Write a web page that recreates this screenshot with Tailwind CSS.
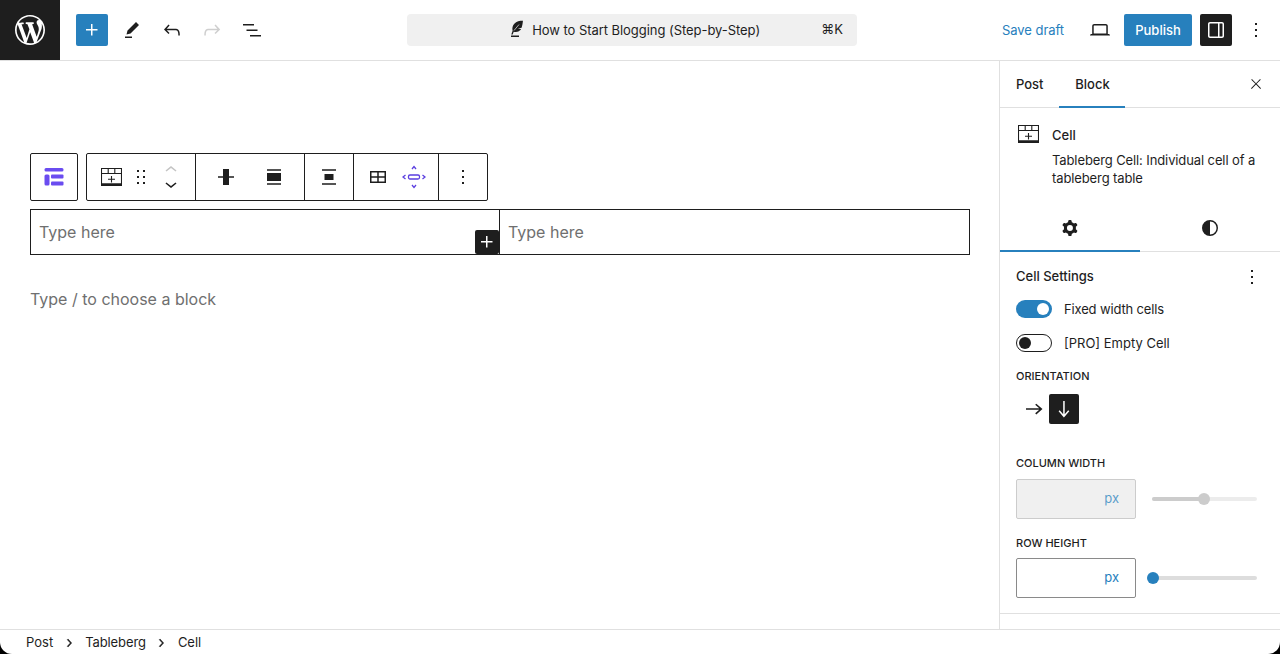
<!doctype html>
<html>
<head>
<meta charset="utf-8">
<script src="https://cdn.jsdelivr.net/npm/@tailwindcss/browser@4"></script>
</head>
<body class="bg-black">
<div class="flex h-[654px] w-[1280px] flex-col overflow-hidden rounded-b-[12px] bg-white font-['Inter','Liberation_Sans',sans-serif] text-[13px] text-[#1e1e1e]">
  <!-- Header -->
  <header class="flex h-[61px] shrink-0 items-center border-b border-[#e0e0e0]">
    <div class="flex h-[60px] w-[60px] shrink-0 items-center justify-center bg-[#1e1e1e]">
      <svg class="h-9 w-9" viewBox="-2 -2 24 24" fill="#fff"><path d="M20 10c0-5.510-4.490-10-10-10C4.480 0 0 4.490 0 10c0 5.520 4.480 10 10 10 5.510 0 10-4.480 10-10zM7.780 15.370L4.370 6.220c.55-.02 1.170-.08 1.170-.08.5-.06.44-1.130-.06-1.110 0 0-1.450.11-2.370.11-.18 0-.37 0-.58-.01C4.120 2.690 6.870 1.070 10 1.070c2.330 0 4.450.87 6.050 2.340-.68-.11-1.650.39-1.650 1.580 0 .74.45 1.360.9 2.100.35.61.55 1.360.55 2.460 0 1.490-1.400 5-1.400 5l-3.030-8.370c.54-.02.82-.17.82-.17.5-.05.44-1.250-.06-1.220 0 0-1.440.12-2.380.12-.87 0-2.330-.12-2.330-.12-.5-.03-.56 1.200-.06 1.220l.92.08 1.260 3.410zM17.410 10c.24-.64.74-1.870.43-4.250.7 1.290 1.050 2.710 1.050 4.250 0 3.290-1.730 6.240-4.400 7.780.97-2.590 1.940-5.200 2.920-7.780zM6.100 18.090C3.120 16.650 1.110 13.530 1.110 10c0-1.300.23-2.480.72-3.590C3.250 10.300 4.670 14.200 6.100 18.090zm4.030-6.630l2.580 6.980c-.86.29-1.760.45-2.710.45-.79 0-1.570-.11-2.290-.33.81-2.380 1.620-4.740 2.420-7.100z"/></svg>
    </div>
    <div class="ml-4 flex items-center gap-2">
      <div class="flex h-8 w-8 items-center justify-center rounded-[2px] bg-[#2780bd]">
        <svg class="h-6 w-6" viewBox="0 0 24 24" fill="#fff"><path d="M11 12.500V17.500H12.500V12.500H17.500V11H12.500V6H11V11H6V12.500H11Z"/></svg>
      </div>
      <div class="flex h-8 w-8 items-center justify-center">
        <svg class="h-6 w-6" viewBox="0 0 24 24" fill="#1e1e1e"><path d="m19 7-3-3-8.500 8.500-1 4 4-1L19 7Zm-7 11.500H5V20h7v-1.500Z"/></svg>
      </div>
      <div class="flex h-8 w-8 items-center justify-center">
        <svg class="h-6 w-6" viewBox="0 0 24 24" fill="#1e1e1e"><path d="M18.300 11.700c-.6-.6-1.400-.9-2.300-.9H6.700l2.900-3.300-1.100-1-4.500 5L8.500 16l1-1-2.700-2.700H16c.5 0 .9.2 1.300.5 1 1 1 3.400 1 4.500v.3h1.500v-.2c0-1.500 0-4.300-1.500-5.700z"/></svg>
      </div>
      <div class="flex h-8 w-8 items-center justify-center">
        <svg class="h-6 w-6" viewBox="0 0 24 24" fill="#cfcfcf"><path d="M15.600 6.500l-1.100 1 2.900 3.300H8c-.9 0-1.700.3-2.300.9-1.400 1.500-1.400 4.200-1.400 5.600v.2h1.500v-.3c0-1.100 0-3.500 1-4.500.3-.3.7-.5 1.300-.5h9.200L14.500 15l1.100 1.100 4.600-4.600-4.600-5z"/></svg>
      </div>
      <div class="flex h-8 w-8 items-center justify-center">
        <svg class="h-6 w-6" viewBox="0 0 24 24" fill="#1e1e1e"><path d="M3 6h11v1.500H3V6Zm3.500 5.500h11V13h-11v-1.500ZM21 17H10v1.500h11V17Z"/></svg>
      </div>
    </div>
    <div class="ml-[139px] flex h-8 w-[450px] items-center rounded-[4px] bg-[#f0f0f0] pr-[14px]">
      <div class="flex flex-1 items-center justify-center gap-[2px] pl-[38px]">
        <svg class="h-6 w-6" viewBox="0 0 24 24" fill="#1e1e1e"><path d="M17 2.500c-3.500.2-6.500 1-8.700 3.200C6.500 7.500 6 10 6.600 12.800L5.300 16.500h1.400l1-2.800c2.600.7 5 .2 6.700-1.600.3-.3.5-.6.700-1l-3.300-.3 3.800-1.100c.7-2 1.200-4.400 1.400-7.700zM5 17.500h8V19H5z"/><path d="M8 12.500L13 6.500" stroke="#f0f0f0" stroke-width=".7"/></svg>
        <span class="text-[13px] leading-none tracking-[-0.05px]">How to Start Blogging (Step-by-Step)</span>
      </div>
      <span class="text-[13px] text-[#1e1e1e]">⌘K</span>
    </div>
    <div class="ml-[145px] flex items-center">
      <span class="w-[62px] pt-px text-[13px] tracking-[-0.05px] whitespace-nowrap text-[#2780bd]">Save draft</span>
      <div class="ml-5 flex h-8 w-8 items-center justify-center">
        <svg class="h-6 w-6" viewBox="0 0 24 24" fill="#1e1e1e"><path d="M20.500 16h-.7V8c0-1.100-.9-2-2-2H6.200c-1.100 0-2 .9-2 2v8h-.7c-.8 0-1.500.7-1.500 1.500h20c0-.8-.7-1.500-1.500-1.500zM5.700 8c0-.3.2-.5.5-.5h11.600c.3 0 .5.2.5.5v7.600H5.700V8z"/></svg>
      </div>
      <div class="ml-2 flex h-8 w-[68px] items-center justify-center rounded-[2px] bg-[#2780bd] pt-px text-[13px] font-medium text-white">Publish</div>
      <div class="ml-2 flex h-8 w-8 items-center justify-center rounded-[2px] bg-[#1e1e1e]">
        <svg class="h-6 w-6" viewBox="0 0 24 24" fill="#fff"><path d="M18 4H6c-1.100 0-2 .9-2 2v12c0 1.100.9 2 2 2h12c1.100 0 2-.9 2-2V6c0-1.100-.9-2-2-2zm-4 14.500H6c-.3 0-.5-.2-.5-.5V6c0-.3.2-.5.5-.5h8v13zm4.500-.5c0 .3-.2.5-.5.5h-2.500v-13H18c.3 0 .5.2.5.5v12z"/></svg>
      </div>
      <div class="ml-2 flex h-8 w-8 items-center justify-center">
        <svg class="h-6 w-6" viewBox="0 0 24 24" fill="#1e1e1e"><path d="M13 19h-2v-2h2v2zm0-6h-2v-2h2v2zm0-6h-2V5h2v2z"/></svg>
      </div>
    </div>
  </header>

  <div class="flex min-h-0 flex-1">
    <!-- Canvas -->
    <main class="w-[999px] shrink-0 px-[30px] pt-[92px]">
      <div class="flex h-12 gap-2">
        <div class="flex w-12 items-center justify-center rounded-[2px] border border-[#1e1e1e]">
          <svg class="h-[20px] w-[20px]" viewBox="0 0 20 20" fill="#6a4cf0"><rect x="0.500" y="1" width="19" height="3.600" rx="1.500"/><rect x="0.500" y="7.500" width="5" height="11" rx="1.500"/><rect x="7" y="7.500" width="12.500" height="4" rx="1"/><rect x="7" y="14.500" width="12.500" height="4" rx="1"/></svg>
        </div>
        <div class="flex w-[402px] rounded-[2px] border border-[#1e1e1e]">
          <div class="flex w-[109px] shrink-0 items-center border-r border-[#1e1e1e] pl-[14px]">
            <svg class="h-[18px] w-[21px]" viewBox="0 0 21 18" fill="none" stroke="#1e1e1e" stroke-width="1.100"><path d="M.5.500h20v17H.500zM.5 5.500h20M7.200.500v5M13.800.500v5M10.500 8v6.500M7 11.200h7"/><path d="M.5 16.500h20" stroke-width="2.500"/></svg>
            <svg class="-mr-[4px] ml-[7px] h-6 w-6" viewBox="0 0 24 24" fill="#1e1e1e"><path d="M8 7h2V5H8v2zm0 6h2v-2H8v2zm0 6h2v-2H8v2zm6-14v2h2V5h-2zm0 8h2v-2h-2v2zm0 6h2v-2h-2v2z"/></svg>
            <div class="ml-[10px] flex flex-col items-center">
              <svg class="h-[14px] w-6" viewBox="0 5 24 14" fill="#c4c4c4"><path d="M6.500 12.400L12 8l5.500 4.400-.9 1.200L12 10l-4.500 3.600-1-1.200z"/></svg>
              <svg class="h-[14px] w-6" viewBox="0 5 24 14" fill="#1e1e1e"><path d="M17.500 11.600L12 16l-5.500-4.400.9-1.200L12 14l4.500-3.600 1 1.200z"/></svg>
            </div>
          </div>
          <div class="flex w-[109px] shrink-0 items-center border-r border-[#1e1e1e]">
            <svg class="ml-[18px] h-6 w-6" viewBox="0 0 24 24" fill="#1e1e1e"><path d="M4 11.250h5V4h6v7.250h5v1.500h-5V20H9v-7.250H4z"/></svg>
            <svg class="ml-[24px] h-6 w-6" viewBox="0 0 24 24" fill="#1e1e1e"><path d="M5 4.250h14v1.500H5zM5 8h14v8H5zM5 18.250h14v1.500H5z"/></svg>
          </div>
          <div class="flex w-[49px] shrink-0 items-center justify-center border-r border-[#1e1e1e]">
            <svg class="h-6 w-6" viewBox="0 0 24 24" fill="#1e1e1e"><path d="M5 4.250h14v1.500H5zM7.500 9h9v6h-9zM5 18.250h14v1.500H5z"/></svg>
          </div>
          <div class="flex w-[85px] shrink-0 items-center border-r border-[#1e1e1e]">
            <svg class="ml-[12px] h-6 w-6" viewBox="0 0 24 24" fill="none" stroke="#1e1e1e" stroke-width="1.500"><path d="M4.750 6.750h14.500v10.500H4.750zM4.750 12h14.500M12 6.750v10.500"/></svg>
            <svg class="ml-[12px] h-6 w-6" viewBox="0 0 24 24" fill="none" stroke="#5b3fe0" stroke-width="1.300"><rect x="6.500" y="10" width="11" height="4" rx="1.500"/><path d="M10 4l2-2.500L14 4M10 20l2 2.500 2-2.500M3.500 10L1 12l2.500 2M20.500 10l2.500 2-2.500 2"/></svg>
          </div>
          <div class="flex flex-1 items-center justify-center">
            <svg class="h-6 w-6" viewBox="0 0 24 24" fill="#1e1e1e"><path d="M13 19h-2v-2h2v2zm0-6h-2v-2h2v2zm0-6h-2V5h2v2z"/></svg>
          </div>
        </div>
      </div>
      <div class="mt-2 flex h-[46px] w-[940px] border border-[#1e1e1e] text-base text-[#6f6f6f]">
        <div class="relative flex w-[469px] items-center border-r border-[#1e1e1e] pl-2">Type here
          <div class="absolute right-0 bottom-0 flex h-6 w-6 items-center justify-center rounded-[2px] bg-[#1e1e1e]">
            <svg class="h-6 w-6" viewBox="0 0 24 24" fill="#fff"><path d="M11 12.500V17.500H12.500V12.500H17.500V11H12.500V6H11V11H6V12.500H11Z"/></svg>
          </div>
        </div>
        <div class="flex flex-1 items-center pl-2">Type here</div>
      </div>
      <p class="mt-[32px] text-base leading-6 text-[#6f6f6f]">Type / to choose a block</p>
    </main>

    <!-- Sidebar -->
    <aside class="w-[281px] shrink-0 border-l border-[#e0e0e0]">
      <div class="flex h-[47px] items-stretch border-b border-[#e0e0e0] pr-[16px] font-medium">
        <div class="flex w-[59px] items-center pt-px pl-4">Post</div>
        <div class="relative -mb-px flex w-[66px] items-center justify-center border-b-2 border-[#2780bd] pt-[2px] pl-px">Block</div>
        <div class="ml-auto flex items-center">
          <svg class="h-4 w-4" viewBox="0 0 24 24" fill="#1e1e1e"><path d="M13 11.800l6.100-6.300-1-1-6.100 6.200-6.100-6.200-1 1 6.100 6.300-6.500 6.700 1 1 6.500-6.600 6.500 6.600 1-1z"/></svg>
        </div>
      </div>
      <div class="flex h-[97px] pt-[17px] pl-[18px]">
        <svg class="h-[18px] w-[21px]" viewBox="0 0 21 18" fill="none" stroke="#1e1e1e" stroke-width="1.100"><path d="M.5.500h20v17H.500zM.5 5.500h20M7.200.500v5M13.800.500v5M10.500 8v6.500M7 11.200h7"/><path d="M.5 16.500h20" stroke-width="2.500"/></svg>
        <div class="ml-[13px] w-[215px]">
          <div class="leading-5 font-medium">Cell</div>
          <div class="mt-[6px] leading-[18px] tracking-[-0.11px]">Tableberg Cell: Individual cell of a tableberg table</div>
        </div>
      </div>
      <div class="flex h-[47px] border-b border-[#e0e0e0]">
        <div class="-mb-px flex w-[140px] items-center justify-center border-b-2 border-[#2780bd]">
          <svg class="h-6 w-6" viewBox="0 0 24 24" fill="#1e1e1e" fill-rule="evenodd"><path d="M10.289 4.836A1 1 0 0111.275 4h1.306a1 1 0 01.987.836l.244 1.466c.787.26 1.503.679 2.108 1.218l1.393-.522a1 1 0 011.216.437l.653 1.130a1 1 0 01-.23 1.273l-1.148.944a6.025 6.025 0 010 2.435l1.149.946a1 1 0 01.23 1.272l-.653 1.130a1 1 0 01-1.216.437l-1.394-.522c-.605.54-1.320.958-2.108 1.218l-.244 1.466a1 1 0 01-.987.836h-1.306a1 1 0 01-.986-.836l-.244-1.466a5.995 5.995 0 01-2.108-1.218l-1.394.522a1 1 0 01-1.217-.436l-.653-1.131a1 1 0 01.23-1.272l1.149-.946a6.026 6.026 0 010-2.435l-1.148-.944a1 1 0 01-.23-1.272l.653-1.131a1 1 0 011.217-.437l1.393.522a5.994 5.994 0 012.108-1.218l.244-1.466zM14.929 12a3 3 0 11-6 0 3 3 0 016 0z"/></svg>
        </div>
        <div class="flex w-[140px] items-center justify-center">
          <svg class="h-6 w-6" viewBox="0 0 24 24" fill="#1e1e1e"><path d="M12 4a8 8 0 100 16 8 8 0 000-16zm0 14.500v-13c3.600 0 6.500 2.900 6.500 6.500s-2.900 6.500-6.500 6.500z"/></svg>
        </div>
      </div>
      <div class="h-[362px] border-b border-[#e0e0e0] px-4">
        <div class="flex h-[48px] items-center justify-between pt-px font-medium">
          <span>Cell Settings</span>
          <svg class="h-6 w-6" viewBox="0 0 24 24" fill="#1e1e1e"><path d="M13 19h-2v-2h2v2zm0-6h-2v-2h2v2zm0-6h-2V5h2v2z"/></svg>
        </div>
        <div class="flex items-center gap-3">
          <div class="flex h-[18px] w-9 items-center justify-end rounded-full bg-[#2780bd] pr-[3px]">
            <span class="h-3 w-3 rounded-full bg-white"></span>
          </div>
          <span class="leading-[18px] tracking-[-0.15px]">Fixed width cells</span>
        </div>
        <div class="mt-4 flex items-center gap-3">
          <div class="flex h-[18px] w-9 items-center rounded-full border border-[#1e1e1e] pl-[2px]">
            <span class="h-3 w-3 rounded-full bg-[#1e1e1e]"></span>
          </div>
          <span class="leading-[18px]">[PRO] Empty Cell</span>
        </div>
        <div class="mt-[16px] text-[11px] leading-[16px] font-medium">ORIENTATION</div>
        <div class="mt-[10px] flex h-[30px] items-center pl-[3px]">
          <div class="flex h-[30px] w-[30px] items-center justify-center">
            <svg class="h-6 w-6" viewBox="0 0 24 24" fill="#1e1e1e"><path d="M14.300 6.700l-1.100 1.100 4 3.500H4v1.500h13.200l-4 3.500 1.100 1.100 6.200-5.300z"/></svg>
          </div>
          <div class="flex h-[30px] w-[30px] items-center justify-center rounded-[2px] bg-[#1e1e1e]">
            <svg class="h-6 w-6" viewBox="0 0 24 24" fill="#fff"><path d="M17.300 14.300l-1.100-1.100-3.500 4V4h-1.500v13.200l-3.500-4-1.100 1.100 5.300 6.200z"/></svg>
          </div>
        </div>
        <div class="mt-[31px] text-[11px] leading-[16px] font-medium">COLUMN WIDTH</div>
        <div class="mt-2 flex h-10 items-center">
          <div class="flex h-10 w-[120px] items-center justify-end rounded-[2px] border border-[#cccccc] bg-[#f0f0f0] pr-4 text-[#2780bd]/75">px</div>
          <div class="relative ml-4 h-1 w-[105px] rounded-full bg-[#ececec]">
            <div class="h-1 w-[53px] rounded-full bg-[#cccccc]"></div>
            <span class="absolute top-[-4px] left-[46px] h-3 w-3 rounded-full bg-[#cccccc]"></span>
          </div>
        </div>
        <div class="mt-[16px] text-[11px] leading-[16px] font-medium">ROW HEIGHT</div>
        <div class="mt-[7px] flex h-10 items-center">
          <div class="flex h-10 w-[120px] items-center justify-end rounded-[2px] border border-[#8a8a8a] pr-4 text-[#2780bd]">px</div>
          <div class="relative ml-4 h-1 w-[105px] rounded-full bg-[#dddddd]">
            <span class="absolute top-[-4px] left-[-5px] h-3 w-3 rounded-full bg-[#2780bd]"></span>
          </div>
        </div>
      </div>
    </aside>
  </div>

  <!-- Footer -->
  <footer class="flex h-[25px] shrink-0 items-center border-t border-[#e0e0e0] pt-px pl-[26px]">
    <span>Post</span>
    <svg class="mx-[8px] h-4 w-4" viewBox="0 0 24 24" fill="#1e1e1e" stroke="#1e1e1e" stroke-width=".8"><path d="M10.600 6L9.400 7l4.600 5-4.600 5 1.200 1 5.400-6z"/></svg>
    <span class="tracking-[-0.1px]">Tableberg</span>
    <svg class="mr-[9px] ml-[7px] h-4 w-4" viewBox="0 0 24 24" fill="#1e1e1e" stroke="#1e1e1e" stroke-width=".8"><path d="M10.600 6L9.400 7l4.600 5-4.600 5 1.200 1 5.400-6z"/></svg>
    <span>Cell</span>
  </footer>
</div>
</body>
</html>
